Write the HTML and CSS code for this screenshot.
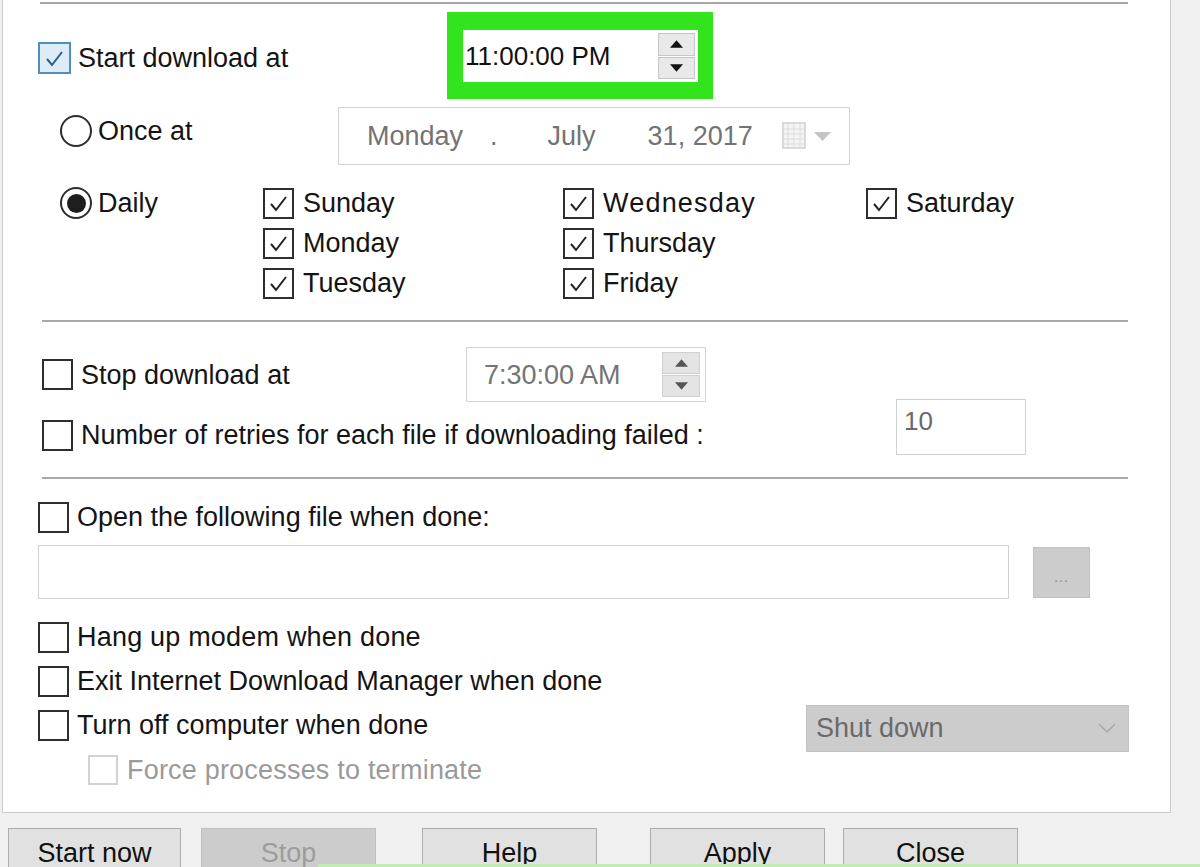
FILE: index.html
```html
<!DOCTYPE html>
<html lang="en">
<head>
<meta charset="utf-8">
<title>Scheduler</title>
<link rel="stylesheet" href="styles.css">
</head>
<body>
<div class="screen">
  <div class="panel">
    <div class="sep sep-top"></div>

    <div class="row row-start">
      <label class="check check-start">
        <span class="box box-blue"><svg viewBox="0 0 27 27"><polyline points="6,14 11,20 21,7" fill="none" stroke="#2f5f80" stroke-width="2"/></svg></span>
        <span class="lbl">Start download at</span>
      </label>
      <div class="highlight">
        <div class="timebox">
          <span class="time">11:00:00 PM</span>
          <div class="spin">
            <span class="spin-btn"><svg viewBox="0 0 14 8"><polygon points="0,8 7,0 14,8" fill="#111"/></svg></span>
            <span class="spin-btn"><svg viewBox="0 0 14 8"><polygon points="0,0 14,0 7,8" fill="#111"/></svg></span>
          </div>
        </div>
      </div>
    </div>

    <div class="row row-once">
      <label class="radio-label">
        <span class="radio"></span>
        <span class="lbl">Once at</span>
      </label>
      <div class="datebox">
        <span class="d-day">Monday</span>
        <span class="d-dot">.</span>
        <span class="d-month">July</span>
        <span class="d-year">31, 2017</span>
        <svg class="cal" viewBox="0 0 25 28"><rect x="1" y="1" width="22" height="25" fill="#f4f4f4" stroke="#cfcfcf" stroke-width="1.5"/><g stroke="#dcdcdc" stroke-width="1"><line x1="1" y1="7" x2="23" y2="7"/><line x1="1" y1="12" x2="23" y2="12"/><line x1="1" y1="17" x2="23" y2="17"/><line x1="1" y1="22" x2="23" y2="22"/><line x1="6" y1="1" x2="6" y2="26"/><line x1="12" y1="1" x2="12" y2="26"/><line x1="18" y1="1" x2="18" y2="26"/></g></svg>
        <svg class="dd" viewBox="0 0 17 9"><polygon points="0,0 17,0 8.5,9" fill="#c4c4c4"/></svg>
      </div>
    </div>

    <div class="row row-daily">
      <div class="col col-radio">
        <label class="radio-label">
          <span class="radio radio-on"></span>
          <span class="lbl">Daily</span>
        </label>
      </div>
      <div class="col col-d1">
        <label class="check day"><span class="box"><svg viewBox="0 0 27 27"><polyline points="6,14 11,20 21,7" fill="none" stroke="#222" stroke-width="2"/></svg></span><span class="lbl">Sunday</span></label>
        <label class="check day"><span class="box"><svg viewBox="0 0 27 27"><polyline points="6,14 11,20 21,7" fill="none" stroke="#222" stroke-width="2"/></svg></span><span class="lbl">Monday</span></label>
        <label class="check day"><span class="box"><svg viewBox="0 0 27 27"><polyline points="6,14 11,20 21,7" fill="none" stroke="#222" stroke-width="2"/></svg></span><span class="lbl">Tuesday</span></label>
      </div>
      <div class="col col-d2">
        <label class="check day"><span class="box"><svg viewBox="0 0 27 27"><polyline points="6,14 11,20 21,7" fill="none" stroke="#222" stroke-width="2"/></svg></span><span class="lbl lbl-wed">Wednesday</span></label>
        <label class="check day"><span class="box"><svg viewBox="0 0 27 27"><polyline points="6,14 11,20 21,7" fill="none" stroke="#222" stroke-width="2"/></svg></span><span class="lbl">Thursday</span></label>
        <label class="check day"><span class="box"><svg viewBox="0 0 27 27"><polyline points="6,14 11,20 21,7" fill="none" stroke="#222" stroke-width="2"/></svg></span><span class="lbl">Friday</span></label>
      </div>
      <div class="col col-d3">
        <label class="check day"><span class="box"><svg viewBox="0 0 27 27"><polyline points="6,14 11,20 21,7" fill="none" stroke="#222" stroke-width="2"/></svg></span><span class="lbl">Saturday</span></label>
      </div>
    </div>

    <div class="sep sep-mid"></div>

    <div class="row row-stop">
      <label class="check check-stop">
        <span class="box"></span>
        <span class="lbl">Stop download at</span>
      </label>
      <div class="timebox timebox-off">
        <span class="time">7:30:00 AM</span>
        <div class="spin spin-off">
          <span class="spin-btn"><svg viewBox="0 0 14 8"><polygon points="0,8 7,0 14,8" fill="#555"/></svg></span>
          <span class="spin-btn"><svg viewBox="0 0 14 8"><polygon points="0,0 14,0 7,8" fill="#555"/></svg></span>
        </div>
      </div>
    </div>

    <div class="row row-retry">
      <label class="check check-retry">
        <span class="box"></span>
        <span class="lbl">Number of retries for each file if downloading failed :</span>
      </label>
      <div class="numbox">10</div>
    </div>

    <div class="sep sep-low"></div>

    <label class="check check-open">
      <span class="box"></span>
      <span class="lbl">Open the following file when done:</span>
    </label>

    <div class="row row-path">
      <div class="pathbox"></div>
      <div class="browse">...</div>
    </div>

    <label class="check check-hang">
      <span class="box"></span>
      <span class="lbl">Hang up modem when done</span>
    </label>
    <label class="check check-exit">
      <span class="box"></span>
      <span class="lbl">Exit Internet Download Manager when done</span>
    </label>

    <div class="row row-off">
      <label class="check check-off">
        <span class="box"></span>
        <span class="lbl">Turn off computer when done</span>
      </label>
      <div class="select">
        <span>Shut down</span>
        <svg class="chev" viewBox="0 0 18 11"><polyline points="1,1 9,9 17,1" fill="none" stroke="#a8a8a8" stroke-width="1.5"/></svg>
      </div>
    </div>

    <label class="check check-force">
      <span class="box box-off"></span>
      <span class="lbl lbl-off">Force processes to terminate</span>
    </label>
  </div>

  <div class="buttons">
    <div class="btn btn-start">Start now</div>
    <div class="btn btn-stop">Stop</div>
    <div class="btn btn-help">Help</div>
    <div class="btn btn-apply">Apply</div>
    <div class="btn btn-close">Close</div>
  </div>

  <div class="green-line"></div>
</div>
</body>
</html>
```

FILE: styles.css
```css
* { box-sizing: border-box; }

html, body {
  margin: 0;
  padding: 0;
  width: 1200px;
  height: 867px;
  overflow: hidden;
  background: #f0f0f0;
  font-family: "Liberation Sans", Arial, sans-serif;
  color: #141414;
}

.screen {
  position: relative;
  width: 1200px;
  height: 867px;
  overflow: hidden;
}

.panel {
  margin-left: 2px;
  width: 1169px;
  height: 813px;
  background: #ffffff;
  border-left: 1px solid #cacaca;
  border-right: 1px solid #cacaca;
  border-bottom: 1px solid #cacaca;
  padding: 2px 0 0 35px;
  display: flex;
  flex-direction: column;
  align-items: flex-start;
}

.sep {
  height: 2px;
  background: #a8a8a8;
  flex: none;
}
.sep-top { margin-left: 2px; width: 1088px; }
.sep-mid { margin-left: 4px; width: 1086px; margin-top: 17px; }
.sep-low { margin-left: 4px; width: 1086px; margin-top: 22px; }

.row { display: flex; align-items: center; flex: none; }

.lbl {
  font-size: 27px;
  line-height: 32px;
  white-space: nowrap;
}

/* checkbox */
.check {
  display: flex;
  align-items: center;
  gap: 8px;
  height: 32px;
  flex: none;
}
.box {
  width: 31px;
  height: 31px;
  border: 2px solid #2e2e2e;
  background: #fff;
  display: flex;
  align-items: center;
  justify-content: center;
  flex: none;
}
.box svg { width: 27px; height: 27px; display: block; }
.box-blue {
  border-color: #4f8fba;
  background: #dcedf8;
  width: 33px;
  height: 32px;
}
.box-off { border-color: #d2d2d2; }
.lbl-off { color: #9a9a9a; letter-spacing: 0.2px; }

/* radio */
.radio-label {
  display: flex;
  align-items: center;
  gap: 6px;
  height: 32px;
}
.radio {
  width: 32px;
  height: 32px;
  border: 2px solid #2e2e2e;
  border-radius: 50%;
  display: flex;
  align-items: center;
  justify-content: center;
  flex: none;
}
.radio-on { border-width: 2.5px; }
.radio-on::after {
  content: "";
  width: 19px;
  height: 19px;
  border-radius: 50%;
  background: #1e1e1e;
}

/* row: start */
.row-start { margin-top: 8px; }
.check-start { width: 409px; margin-top: 5px; gap: 7px; }
.highlight {
  background: #31e41d;
  padding: 18px 15px 17px 16px;
}
.timebox {
  width: 235px;
  height: 52px;
  background: #fff;
  display: flex;
  align-items: center;
  justify-content: space-between;
  padding: 0 3px 0 2px;
}
.time { font-size: 26px; line-height: 30px; color: #111; }
.spin {
  width: 37px;
  height: 46px;
  display: flex;
  flex-direction: column;
  gap: 1px;
}
.spin-btn {
  flex: 1;
  background: #e9e9e9;
  border: 1px solid #c6c6c6;
  display: flex;
  align-items: center;
  justify-content: center;
}
.spin-btn svg { width: 13px; height: 8px; display: block; }

/* row: once */
.row-once { margin-top: 8px; align-items: flex-start; }
.row-once .radio-label { margin-left: 22px; width: 278px; margin-top: 8px; }
.datebox {
  width: 512px;
  height: 58px;
  border: 1px solid #d4d4d4;
  display: flex;
  align-items: center;
  padding: 0 18px 0 28px;
  color: #737373;
  font-size: 27px;
}
.d-dot { margin-left: 27px; }
.d-month { margin-left: 50px; }
.d-year { margin-left: 52px; }
.cal { width: 25px; height: 28px; margin-left: auto; }
.dd { width: 17px; height: 9px; margin-left: 7px; }

/* row: daily */
.row-daily { margin-top: 18px; align-items: flex-start; }
.col { display: flex; flex-direction: column; }
.col-radio { margin-left: 22px; width: 203px; padding-top: 4px; }
.col-d1 { width: 300px; }
.col-d2 { width: 303px; }
.day { height: 40px; gap: 9px; }
.lbl-wed { letter-spacing: 1.2px; }

/* row: stop */
.row-stop { margin-top: 25px; padding-left: 4px; }
.check-stop { width: 424px; }
.timebox-off {
  width: 240px;
  height: 55px;
  border: 1px solid #d4d4d4;
  padding: 0 5px 0 17px;
}
.timebox-off .time { color: #747474; font-size: 27px; }
.spin-off { width: 38px; height: 45px; }
.spin-off .spin-btn { background: #e4e4e4; border-color: #d0d0d0; }

/* row: retries */
.row-retry { margin-top: -3px; padding-left: 4px; height: 56px; }
.check-retry { width: 854px; align-self: flex-end; margin-bottom: 4px; }
.numbox {
  width: 130px;
  height: 56px;
  border: 1px solid #d0d0d0;
  font-size: 26px;
  line-height: 30px;
  color: #6a6a6a;
  padding: 6px 0 0 7px;
}

/* open file */
.check-open { margin-top: 22px; }
.row-path { margin-top: 12px; }
.pathbox {
  width: 971px;
  height: 54px;
  border: 1px solid #d2d2d2;
  background: #fff;
}
.browse {
  margin-left: 24px;
  width: 57px;
  height: 51px;
  background: #cccccc;
  border: 1px solid #c2c2c2;
  color: #8a8a8a;
  font-size: 14px;
  letter-spacing: 1px;
  display: flex;
  align-items: flex-end;
  justify-content: center;
  padding-bottom: 12px;
}

.check-hang { margin-top: 22px; }
.check-hang .lbl { letter-spacing: 0.2px; }
.check-exit { margin-top: 12px; }

.row-off { margin-top: 8px; height: 47px; align-items: flex-start; }
.check-off { width: 768px; margin-top: 4px; }
.select {
  width: 323px;
  height: 47px;
  background: #cccccc;
  border: 1px solid #c4c4c4;
  display: flex;
  align-items: center;
  justify-content: space-between;
  padding: 0 12px 0 9px;
  color: #6a6a6a;
  font-size: 27px;
}
.chev { width: 18px; height: 11px; }

.check-force { margin-top: 2px; margin-left: 50px; gap: 9px; }
.check-force .box { width: 30px; height: 30px; }

/* buttons */
.buttons {
  margin-top: 15px;
  padding-left: 8px;
  display: flex;
}
.btn {
  height: 52px;
  width: 175px;
  background: #e1e1e1;
  border: 1px solid #adadad;
  font-size: 27px;
  line-height: 27px;
  text-align: center;
  padding-top: 11px;
  color: #111;
  flex: none;
}
.btn-start { width: 173px; }
.btn-stop { margin-left: 20px; background: #cccccc; border-color: #c0c0c0; color: #9c9c9c; }
.btn-help { margin-left: 46px; }
.btn-apply { margin-left: 53px; }
.btn-close { margin-left: 18px; }

.green-line {
  position: absolute;
  left: 318px;
  right: 0;
  top: 864px;
  height: 3px;
  background: #c3ebb8;
}
```
